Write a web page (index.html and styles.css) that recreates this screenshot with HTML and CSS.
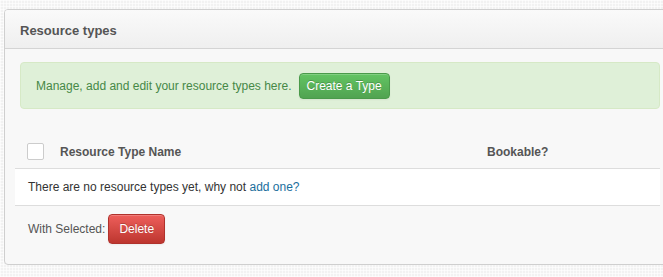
FILE: index.html
```html
<!DOCTYPE html>
<html lang="en">
<head>
    <meta charset="UTF-8">
    <title>Resource types</title>
    <link rel="stylesheet" href="styles.css">
</head>
<body>
    <div class="panel">
        <div class="panel-head">
            <h2>Resource types</h2>
        </div>
        <div class="panel-body">
            <div class="alert">
                <span>Manage, add and edit your resource types here.</span>
                <a href="#" class="btn btn-success">Create a Type</a>
            </div>

            <table class="list">
                <thead>
                    <tr>
                        <th class="check"><span class="checkbox"></span></th>
                        <th class="name">Resource Type Name</th>
                        <th>Bookable?</th>
                    </tr>
                </thead>
                <tbody>
                    <tr>
                        <td colspan="3" class="empty">There are no resource types yet, why not <a href="#">add one?</a></td>
                    </tr>
                </tbody>
            </table>

            <div class="actions">
                <span>With Selected:</span>
                <a href="#" class="btn btn-danger">Delete</a>
            </div>
        </div>
    </div>
</body>
</html>
```

FILE: styles.css
```css
html, body {
    margin: 0;
    padding: 0;
    height: 100%;
    overflow: hidden;
}

body {
    font-family: "Liberation Sans", Arial, sans-serif;
    font-size: 12px;
    color: #333;
    background-color: #f2f2f2;
    background-image:
        repeating-linear-gradient(0deg, rgba(255,255,255,0.6) 0 1px, transparent 1px 3px),
        repeating-linear-gradient(90deg, rgba(255,255,255,0.6) 0 1px, transparent 1px 3px);
    padding: 9px 0 0 4px;
}

.panel {
    width: 672px;
    height: 256px;
    box-sizing: border-box;
    border: 1px solid #cfcfcf;
    border-radius: 4px;
    background: #f8f8f8;
    overflow: hidden;
}

.panel-head {
    height: 39px;
    display: flex;
    align-items: center;
    padding: 2px 15px 0;
    box-sizing: border-box;
    background: linear-gradient(#fafafa, #efefef);
    border-bottom: 1px solid #d4d4d4;
}

.panel-head h2 {
    margin: 0;
    font-size: 13px;
    font-weight: bold;
    color: #555;
}

.panel-body {
    padding: 13px 15px 0 10px;
}

.alert {
    margin-left: 5px;
    height: 45px;
    display: flex;
    align-items: center;
    gap: 7px;
    padding: 0 15px;
    background: #dff0d8;
    border: 1px solid #d6e9c6;
    border-radius: 4px;
    color: #468847;
}

.btn {
    display: inline-block;
    text-decoration: none;
    color: #fff;
    font-size: 12px;
    border-radius: 4px;
    text-shadow: 0 -1px 0 rgba(0,0,0,0.2);
    box-shadow: inset 0 1px 0 rgba(255,255,255,0.2), 0 1px 2px rgba(0,0,0,0.05);
}

.btn-success {
    padding: 0 7px;
    line-height: 24px;
    background: linear-gradient(#62c462, #51a351);
    border: 1px solid #4a9a4a;
}

.btn-danger {
    padding: 0 10px;
    line-height: 28px;
    background: linear-gradient(#ee5f5b, #bd362f);
    border: 1px solid #b0322c;
}

.list {
    width: 100%;
    margin-top: 26px;
    border-collapse: collapse;
}

.list th {
    height: 33px;
    text-align: left;
    font-size: 12px;
    font-weight: bold;
    color: #555;
    border-bottom: 1px solid #ddd;
    padding: 0;
}

.list th.check {
    width: 45px;
}

.checkbox {
    display: block;
    width: 15px;
    height: 15px;
    margin-left: 12px;
    background: #fff;
    border: 1px solid #ccc;
    border-radius: 2px;
}

.list th.name {
    width: 427px;
}

.list td {
    height: 36px;
    background: #fff;
    border-bottom: 1px solid #ddd;
    padding: 0 0 0 13px;
    font-size: 12px;
}

.list a {
    color: #1a6e9c;
    text-decoration: none;
}

.actions {
    display: flex;
    align-items: center;
    gap: 3px;
    padding: 8px 0 0 13px;
    color: #555;
}
```
